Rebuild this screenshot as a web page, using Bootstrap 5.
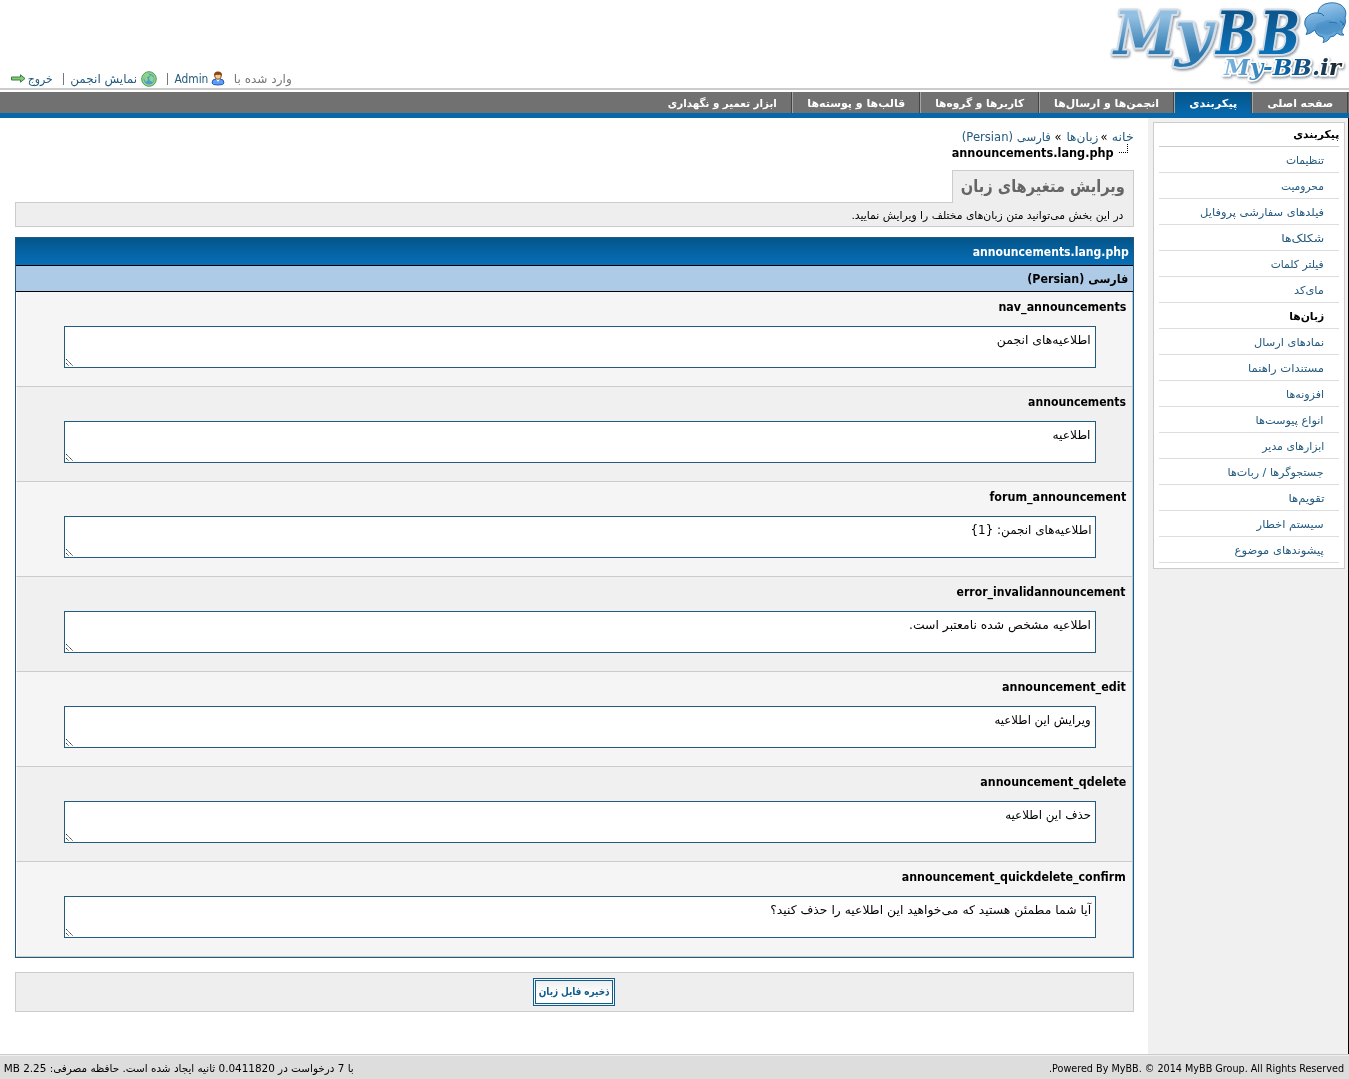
<!DOCTYPE html>
<html lang="fa" dir="rtl">
<head>
<meta charset="utf-8">
<title>MyBB</title>
<link href="https://cdn.jsdelivr.net/npm/bootstrap@5.3.0/dist/css/bootstrap.min.css" rel="stylesheet">
<style>
body{font:11px/16px "DejaVu Sans Condensed","DejaVu Sans",sans-serif;color:#000;background:#fff;height:1079px;overflow:hidden}
a{color:#245a7e;text-decoration:none}
.fit{display:inline-block;white-space:nowrap;flex:none}
.fit>span{display:inline-block;transform-origin:100% 50%}
.top-head{height:90px;border-bottom:2px solid #ccc;flex:none}
.user-line{color:#777;font-size:12px;padding:2px 0 0 11px;height:21px}
.user-line .fit{margin-top:1px}
.vbar{width:1px;height:12px;background:#777}
.main-menu{height:26px;margin-top:2px;background:#717171;border-bottom:5px solid #0668aa;padding-right:1px;flex:none}
.main-menu a{height:21px;color:#fff;font-weight:700;font-size:11px;border-right:1px solid #444;border-left:1px solid #a5a5a5;padding:3px 14px 0;line-height:17px}
.main-menu a.on{background:linear-gradient(#04558a,#0668aa)}
.main-menu a:last-child{border-left:0}
.side-col{width:201px;background:#f0f0f0;border-right:1px solid #000;padding:4px 3px 0 5px;flex:none}
.side-box{background:#fff;border:1px solid #ccc;padding:0 5px 6px;height:447px}
.side-box div{height:26px;border-bottom:1px solid #ddd;padding:6px 15px 0 0}
.side-box div:first-child{height:24px;border-color:#ccc;padding:4px 0 0;font-weight:700}
.main-col{padding:10px 14px 0 15px;min-width:0}
.crumbs{font-size:12px;height:18px;line-height:18px}
.crumb-now{font-size:13px;font-weight:700;height:16px;line-height:13px;padding-right:6px}
.elbow{width:9px;height:9px;border-right:1px dotted #000;border-bottom:1px dotted #000;margin:-2px 0 0 5px}
.tab-on{width:182px;height:33px;margin:8px 0 -1px;position:relative;z-index:1;background:#eee;border:1px solid #ccc;border-bottom:0;color:#666;font-size:17px;font-weight:700;padding:3px 8px 0 0;line-height:24px}
.tab-info{height:25px;background:#eee;border:1px solid #ccc;padding:5px 10px 0 0}
.lang-table{margin-top:10px;border:1px solid #245a7e;height:721px}
.lang-title{height:28px;border-bottom:1px solid #000;background:linear-gradient(#04558a,#066fb8);color:#fff;font-weight:700;font-size:12px;padding:6px 4px 0 0}
.lang-sub{height:26px;border-bottom:1px solid #000;background:#adcbe7;font-weight:700;font-size:12px;padding:5px 5px 0 0}
.lang-row{height:95px;background:#f5f5f5;border-bottom:1px solid #ccc;border-right:1px solid #adcbe7;border-left:1px solid #fff;padding:7px 6px 0 47px;font-weight:700;font-size:12px}
.lang-row:nth-child(even){background:#f0f0f0}
.area{height:42px;border:1px solid #245a7e;background:#fff;margin:11px 30px 0 0;padding:5px 4px 0 0;font-weight:400;font-size:12px;position:relative}
.area svg{position:absolute;left:1px;bottom:1px}
.save-bar{margin-top:14px;height:40px;background:#eee;border:1px solid #ccc;padding-left:0;padding-right:1px}
.save-btn{width:82px;height:28px;border:3px double #0f5c8e;background:#fff linear-gradient(#eee,#fff 60%);color:#0f5c8e;font:bold 11px/18px "Liberation Sans","DejaVu Sans Condensed",sans-serif;padding:0 2px 2px}
.foot{height:25px;background:#ddd;border-top:1px solid #ccc;box-shadow:inset 0 1px #eee;padding:6px 5px 0 4px;flex:none}
</style>
<script src="https://cdn.jsdelivr.net/npm/bootstrap@5.3.0/dist/js/bootstrap.bundle.min.js"></script>
</head>
<body class="d-flex flex-column">
<header class="top-head d-flex justify-content-between">
<svg width="250" height="88" viewBox="0 0 250 88" style="direction:ltr">
<defs>
<linearGradient id="lt" x1="0" y1="0" x2="0" y2="1"><stop offset=".25" stop-color="#93c0e2"/><stop offset=".8" stop-color="#2c77ae"/></linearGradient>
<linearGradient id="dk" x1="0" y1="0" x2="0" y2="1"><stop offset=".2" stop-color="#07548b"/><stop offset=".8" stop-color="#0773b9"/></linearGradient>
<linearGradient id="sm" x1="0" y1="0" x2="1" y2="0"><stop offset="0" stop-color="#8dbfe3"/><stop offset=".45" stop-color="#0a68ab"/><stop offset=".7" stop-color="#155080"/><stop offset="1" stop-color="#222"/></linearGradient>
<linearGradient id="bub" gradientUnits="userSpaceOnUse" x1="222" y1="3" x2="232" y2="42"><stop offset="0" stop-color="#9ccaee"/><stop offset=".6" stop-color="#5398cd"/><stop offset="1" stop-color="#6fb0e0"/></linearGradient>
<filter id="sh" x="-10%" y="-10%" width="120%" height="130%"><feDropShadow dx="1" dy="1.5" stdDeviation="1.3" flood-color="#456" flood-opacity=".65"/></filter>
</defs>
<g font-family="'DejaVu Serif Condensed','DejaVu Serif',serif" font-weight="bold" font-style="italic" paint-order="stroke" stroke-linejoin="round">
<g font-size="59" stroke="#d2dde7" stroke-width="4" filter="url(#sh)">
<text x="15" y="54" fill="url(#lt)" textLength="62" lengthAdjust="spacingAndGlyphs">M</text>
<text x="76" y="54" fill="url(#lt)" textLength="37" lengthAdjust="spacingAndGlyphs">y</text>
<text x="117" y="54" fill="url(#dk)" textLength="40" lengthAdjust="spacingAndGlyphs">B</text>
<text x="161" y="54" fill="url(#dk)" textLength="40" lengthAdjust="spacingAndGlyphs">B</text>
</g>
<text x="125" y="75" font-size="22" fill="url(#sm)" stroke="#fff" stroke-width="3" filter="url(#sh)" textLength="117" lengthAdjust="spacingAndGlyphs">My-BB.ir</text>
</g>
<path d="M207 34.500Q209 32 208 29Q204 24 207 18Q212 12 219 13Q219 7 226 4Q235 1 242 5Q249 10 246 18Q248 23 243 30Q242 33 245 35Q241 36 238 33Q236 37 231 37Q230 41 224 42.500Q226 40 224 37Q217 36 216 30Q211 34 207 34.500Z" fill="url(#bub)" stroke="#2b72ab"/>
<path d="M219 13Q223 13 225 16M230 22.500h6l2 1M241 21l4 3-2 1" stroke="#1d6ba5" fill="none"/>
<path d="M216 28Q217 22 224 22Q229 18 235 22Q242 23 243 29Q238 33 235 32Q230 36 224 34Q218 33 216 28Z" fill="#438ac2" opacity=".45"/>
</svg>
<div class="user-line d-flex align-items-center align-self-end mb-0">
<span class="fit" data-w="58">وارد شده با</span>
<svg width="14" height="15" viewBox="0 0 14 15" style="margin-right:9px"><path d="M1 12Q1 8 5 8L9 8Q13 8 13 12Q13 14 7 14Q1 14 1 12Z" fill="#5b9df5" stroke="#235cc0"/><path d="M5 8l2 3 2-3z" fill="#fff"/><circle cx="7" cy="5" r="3.300" fill="#f4c795" stroke="#8b522a"/><path d="M3 5Q2.500 .5 7 .5Q11.500 .5 11 5Q9 3 7 4Q5 3 3 5Z" fill="#8b4513"/></svg>
<a href="#" class="fit" data-w="34" style="margin-right:3px">Admin</a>
<i class="vbar" style="margin-right:6px"></i>
<svg width="16" height="16" viewBox="0 0 16 16" style="margin-right:10px"><circle cx="8" cy="8" r="7.300" fill="#9ad695" stroke="#459f48"/><circle cx="8" cy="8" r="5.500" fill="#4d9dc6"/><path d="M3 6Q4 2 8 3L9 5 6 6 7 9 5 11Q3 9 3 6ZM10 4l3 3-1 4-3-1-1-3z" fill="#8fd488"/></svg>
<a href="#" class="fit" data-w="67" style="margin-right:4px">نمایش انجمن</a>
<i class="vbar" style="margin-right:6px"></i>
<a href="#" class="fit" data-w="25" style="margin-right:10px">خروج</a>
<svg width="15" height="9" viewBox="0 0 15 9" style="margin-right:2px"><path d="M.5 3H9.500V.8L14 4.500 9.500 8.200V6H.5Z" fill="#86c97c" stroke="#397f3c"/></svg>
</div>
</header>
<nav class="main-menu d-flex">
<a href="#"><span class="fit" data-w="66">صفحه اصلی</span></a>
<a href="#" class="on"><span class="fit" data-w="48">پیکربندی</span></a>
<a href="#"><span class="fit" data-w="105">انجمن‌ها و ارسال‌ها</span></a>
<a href="#"><span class="fit" data-w="89">کاربرها و گروه‌ها</span></a>
<a href="#"><span class="fit" data-w="98">قالب‌ها و پوسته‌ها</span></a>
<a href="#"><span class="fit" data-w="109">ابزار تعمیر و نگهداری</span></a>
</nav>
<div class="d-flex flex-grow-1">
<aside class="side-col"><div class="side-box">
<div><span class="fit" data-w="46">پیکربندی</span></div>
<div><a href="#" class="fit" data-w="38">تنظیمات</a></div>
<div><a href="#" class="fit" data-w="43">محرومیت</a></div>
<div><a href="#" class="fit" data-w="124">فیلدهای سفارشی پروفایل</a></div>
<div><a href="#" class="fit" data-w="43">شکلک‌ها</a></div>
<div><a href="#" class="fit" data-w="53">فیلتر کلمات</a></div>
<div><a href="#" class="fit" data-w="30">مای‌کد</a></div>
<div><b class="fit" data-w="35">زبان‌ها</b></div>
<div><a href="#" class="fit" data-w="70">نمادهای ارسال</a></div>
<div><a href="#" class="fit" data-w="76">مستندات راهنما</a></div>
<div><a href="#" class="fit" data-w="38">افزونه‌ها</a></div>
<div><a href="#" class="fit" data-w="68">انواع پیوست‌ها</a></div>
<div><a href="#" class="fit" data-w="62">ابزارهای مدیر</a></div>
<div><a href="#" class="fit" data-w="96">جستجوگرها / ربات‌ها</a></div>
<div><a href="#" class="fit" data-w="36">تقویم‌ها</a></div>
<div><a href="#" class="fit" data-w="67">سیستم اخطار</a></div>
<div><a href="#" class="fit" data-w="89">پیشوندهای موضوع</a></div>
</div></aside>
<main class="main-col flex-grow-1">
<div class="crumbs d-flex"><a href="#" class="fit" data-w="22">خانه</a><span class="fit" data-w="7" style="margin:0 4px 0 3px">»</span><a href="#" class="fit" data-w="32">زبان‌ها</a><span class="fit" data-w="7" style="margin:0 4px">»</span><a href="#" class="fit" data-w="89">فارسی (Persian)</a></div>
<div class="crumb-now d-flex"><i class="elbow"></i><span class="fit" data-w="162">announcements.lang.php</span></div>
<div class="tab-on"><span class="fit" data-w="164">ویرایش متغیرهای زبان</span></div>
<div class="tab-info"><span class="fit" data-w="272">در این بخش می‌توانید متن زبان‌های مختلف را ویرایش نمایید.</span></div>
<section class="lang-table">
<div class="lang-title"><span class="fit" data-w="156">announcements.lang.php</span></div>
<div class="lang-sub"><span class="fit" data-w="101">فارسی (Persian)</span></div>
<div class="lang-row"><span class="fit" data-w="128">nav_announcements</span><div class="area"><span class="fit" data-w="94">اطلاعیه‌های انجمن</span></div></div>
<div class="lang-row"><span class="fit" data-w="98">announcements</span><div class="area"><span class="fit" data-w="38">اطلاعیه</span></div></div>
<div class="lang-row"><span class="fit" data-w="137">forum_announcement</span><div class="area"><span class="fit" data-w="121">اطلاعیه‌های انجمن: {1}</span></div></div>
<div class="lang-row"><span class="fit" data-w="169">error_invalidannouncement</span><div class="area"><span class="fit" data-w="182">اطلاعیه مشخص شده نامعتبر است.</span></div></div>
<div class="lang-row"><span class="fit" data-w="124">announcement_edit</span><div class="area"><span class="fit" data-w="96">ویرایش این اطلاعیه</span></div></div>
<div class="lang-row"><span class="fit" data-w="146">announcement_qdelete</span><div class="area"><span class="fit" data-w="86">حذف این اطلاعیه</span></div></div>
<div class="lang-row"><span class="fit" data-w="224">announcement_quickdelete_confirm</span><div class="area"><span class="fit" data-w="321">آیا شما مطمئن هستید که می‌خواهید این اطلاعیه را حذف کنید؟</span></div></div>
</section>
<div class="save-bar d-flex justify-content-center align-items-center"><button class="save-btn"><span class="fit" data-w="71">ذخیره فایل زبان</span></button></div>
</main>
</div>
<footer class="foot d-flex justify-content-between"><span class="fit" data-w="295">Powered By MyBB. © 2014 MyBB Group. All Rights Reserved.</span><span class="fit" data-w="350">با 7 درخواست در 0.0411820 ثانیه ایجاد شده است. حافظه مصرفی: 2.25 MB</span></footer>
<script>
// Resize grips of the text areas
document.querySelectorAll('.area').forEach(function(a){
  a.insertAdjacentHTML('beforeend','<svg width="8" height="8" viewBox="0 0 8 8"><path d="M0 1l7 7M0 5l3 3" stroke="#333" stroke-dasharray="1.410 .5" fill="none"/></svg>');
});
document.querySelectorAll('.fit').forEach(function(e){
  var s=document.createElement('span');
  s.textContent=e.textContent;e.textContent='';e.appendChild(s);
  var n=s.getBoundingClientRect().width,w=+e.dataset.w;
  e.style.width=w+'px';
  s.style.transform='scaleX('+w/n+')';
});
</script>
</body>
</html>
